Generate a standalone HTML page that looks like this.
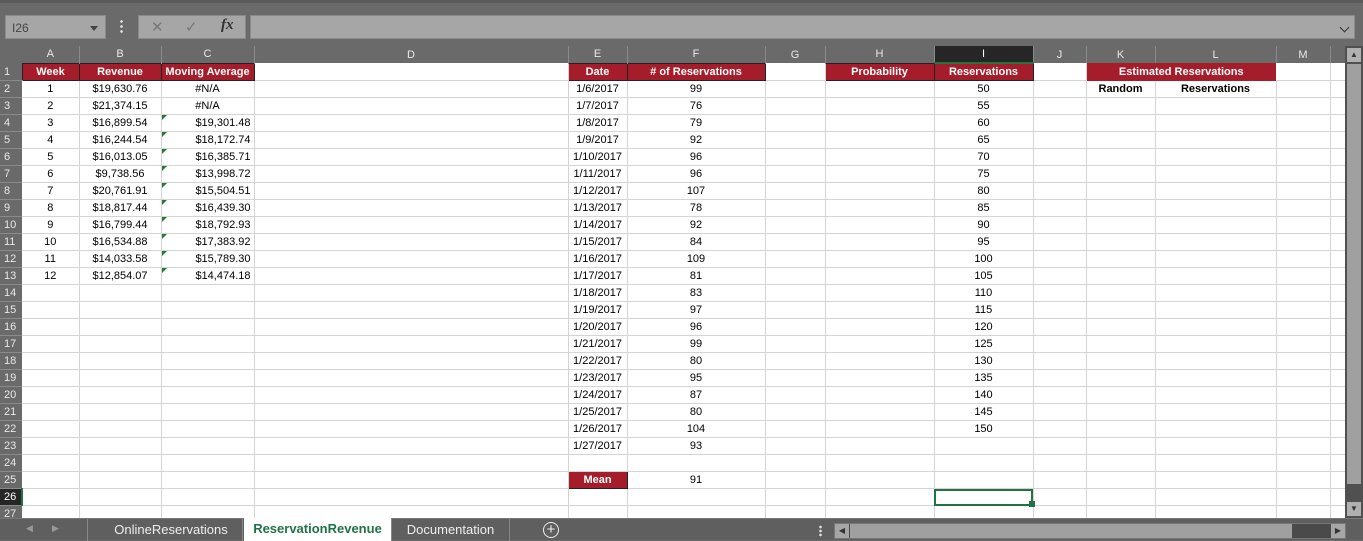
<!DOCTYPE html>
<html><head><meta charset="utf-8"><style>
*{margin:0;padding:0;box-sizing:border-box}
body{width:1363px;height:540px;overflow:hidden;background:#6a6a6a;font-family:"Liberation Sans",sans-serif;position:relative}
.top{position:absolute;left:0;top:0;width:1363px;height:45px;background:#6a6a6a;border-top:3px solid #5a5a5a}
.nb{position:absolute;left:5px;top:12px;width:101px;height:24px;background:#a6a6a6;border:1px solid #8a8a8a;font-size:12px;color:#444;padding:5px 0 0 6px}
.nb:after{content:"";position:absolute;right:7px;top:10px;border:4px solid transparent;border-top:5px solid #444}
.dots{position:absolute;left:120px;top:16px;width:3px;height:14px;background:radial-gradient(circle,#ddd 1.2px,transparent 1.5px) 0 0/3px 5px}
.fx{position:absolute;left:138px;top:12px;width:108px;height:24px;background:#a6a6a6;border:1px solid #8a8a8a;color:#777;font-size:15px}
.fb{position:absolute;left:250px;top:12px;width:1105px;height:24px;background:#a6a6a6;border:1px solid #8a8a8a}
.fb:after{content:"";position:absolute;right:6px;top:8px;width:6px;height:6px;border-right:1.5px solid #333;border-bottom:1.5px solid #333;transform:rotate(45deg)}
table{position:absolute;left:0;top:46px;border-collapse:collapse;table-layout:fixed;background:#fff;font-size:11px;color:#000}
td{height:17px;border-right:1px solid #d4d4d4;border-bottom:1px solid #d4d4d4;text-align:center;white-space:nowrap;overflow:hidden;padding:0;line-height:16px;position:relative}
tr.h td{background:#6a6a6a;color:#e8e8e8;border-right:1px solid #8a8a8a;border-bottom:none;height:17px;font-size:11px}
td.r{background:#6a6a6a;color:#e8e8e8;border-right:none;border-bottom:1px solid #8a8a8a;text-align:left;padding-left:4px}
td.sel{background:#262626!important;color:#fff!important}
.red{background:#a51c2b;color:#fff;font-weight:bold;border:1px solid #222}
.b{font-weight:bold}
.rt{text-align:right;padding-right:3px}
.t:before{content:"";position:absolute;left:0;top:0;border-top:5px solid #1e7d32;border-right:5px solid transparent}
.tabs{position:absolute;left:0;top:518px;width:1363px;height:22px;background:#5f5f5f;border-top:1px solid #777;font-size:13px;color:#eee}
.tab{position:absolute;top:0;height:22px;padding-top:3px;text-align:center;border-right:1px solid #888}
.vs{position:absolute;left:1345px;top:46px;width:18px;height:472px;background:#505050}
</style></head><body>
<div class="top">
<div class="nb">I26</div>
<div class="dots"></div>
<div class="fx"><span style="position:absolute;left:12px;top:2px">✕</span><span style="position:absolute;left:46px;top:2px">✓</span><span style="position:absolute;left:82px;top:1px;color:#333;font-style:italic;font-family:'Liberation Serif',serif;font-weight:bold">fx</span></div>
<div class="fb"></div>
</div>
<table>
<colgroup><col style="width:22px"><col style="width:57px"><col style="width:82px"><col style="width:93px"><col style="width:314px"><col style="width:59px"><col style="width:138px"><col style="width:60px"><col style="width:109px"><col style="width:99px"><col style="width:53px"><col style="width:69px"><col style="width:121px"><col style="width:54px"><col style="width:16px"></colgroup>
<tr class="h"><td style="border-right:none"></td><td>A</td><td>B</td><td>C</td><td>D</td><td>E</td><td>F</td><td>G</td><td>H</td><td class="sel" style="border-bottom:2px solid #217346">I</td><td>J</td><td>K</td><td>L</td><td>M</td><td></td></tr>
<tr><td class="r">1</td><td class="red">Week</td><td class="red">Revenue</td><td class="red">Moving Average</td><td></td><td class="red">Date</td><td class="red"># of Reservations</td><td></td><td class="red">Probability</td><td class="red">Reservations</td><td></td><td class="red" colspan="2" style="border:none">Estimated Reservations</td><td></td><td></td></tr>
<tr><td class="r">2</td><td>1</td><td>$19,630.76</td><td>#N/A</td><td></td><td>1/6/2017</td><td>99</td><td></td><td></td><td>50</td><td></td><td class="b">Random</td><td class="b">Reservations</td><td></td><td></td></tr>
<tr><td class="r">3</td><td>2</td><td>$21,374.15</td><td>#N/A</td><td></td><td>1/7/2017</td><td>76</td><td></td><td></td><td>55</td><td></td><td></td><td></td><td></td><td></td></tr>
<tr><td class="r">4</td><td>3</td><td>$16,899.54</td><td class="rt t">$19,301.48</td><td></td><td>1/8/2017</td><td>79</td><td></td><td></td><td>60</td><td></td><td></td><td></td><td></td><td></td></tr>
<tr><td class="r">5</td><td>4</td><td>$16,244.54</td><td class="rt t">$18,172.74</td><td></td><td>1/9/2017</td><td>92</td><td></td><td></td><td>65</td><td></td><td></td><td></td><td></td><td></td></tr>
<tr><td class="r">6</td><td>5</td><td>$16,013.05</td><td class="rt t">$16,385.71</td><td></td><td>1/10/2017</td><td>96</td><td></td><td></td><td>70</td><td></td><td></td><td></td><td></td><td></td></tr>
<tr><td class="r">7</td><td>6</td><td>$9,738.56</td><td class="rt t">$13,998.72</td><td></td><td>1/11/2017</td><td>96</td><td></td><td></td><td>75</td><td></td><td></td><td></td><td></td><td></td></tr>
<tr><td class="r">8</td><td>7</td><td>$20,761.91</td><td class="rt t">$15,504.51</td><td></td><td>1/12/2017</td><td>107</td><td></td><td></td><td>80</td><td></td><td></td><td></td><td></td><td></td></tr>
<tr><td class="r">9</td><td>8</td><td>$18,817.44</td><td class="rt t">$16,439.30</td><td></td><td>1/13/2017</td><td>78</td><td></td><td></td><td>85</td><td></td><td></td><td></td><td></td><td></td></tr>
<tr><td class="r">10</td><td>9</td><td>$16,799.44</td><td class="rt t">$18,792.93</td><td></td><td>1/14/2017</td><td>92</td><td></td><td></td><td>90</td><td></td><td></td><td></td><td></td><td></td></tr>
<tr><td class="r">11</td><td>10</td><td>$16,534.88</td><td class="rt t">$17,383.92</td><td></td><td>1/15/2017</td><td>84</td><td></td><td></td><td>95</td><td></td><td></td><td></td><td></td><td></td></tr>
<tr><td class="r">12</td><td>11</td><td>$14,033.58</td><td class="rt t">$15,789.30</td><td></td><td>1/16/2017</td><td>109</td><td></td><td></td><td>100</td><td></td><td></td><td></td><td></td><td></td></tr>
<tr><td class="r">13</td><td>12</td><td>$12,854.07</td><td class="rt t">$14,474.18</td><td></td><td>1/17/2017</td><td>81</td><td></td><td></td><td>105</td><td></td><td></td><td></td><td></td><td></td></tr>
<tr><td class="r">14</td><td></td><td></td><td></td><td></td><td>1/18/2017</td><td>83</td><td></td><td></td><td>110</td><td></td><td></td><td></td><td></td><td></td></tr>
<tr><td class="r">15</td><td></td><td></td><td></td><td></td><td>1/19/2017</td><td>97</td><td></td><td></td><td>115</td><td></td><td></td><td></td><td></td><td></td></tr>
<tr><td class="r">16</td><td></td><td></td><td></td><td></td><td>1/20/2017</td><td>96</td><td></td><td></td><td>120</td><td></td><td></td><td></td><td></td><td></td></tr>
<tr><td class="r">17</td><td></td><td></td><td></td><td></td><td>1/21/2017</td><td>99</td><td></td><td></td><td>125</td><td></td><td></td><td></td><td></td><td></td></tr>
<tr><td class="r">18</td><td></td><td></td><td></td><td></td><td>1/22/2017</td><td>80</td><td></td><td></td><td>130</td><td></td><td></td><td></td><td></td><td></td></tr>
<tr><td class="r">19</td><td></td><td></td><td></td><td></td><td>1/23/2017</td><td>95</td><td></td><td></td><td>135</td><td></td><td></td><td></td><td></td><td></td></tr>
<tr><td class="r">20</td><td></td><td></td><td></td><td></td><td>1/24/2017</td><td>87</td><td></td><td></td><td>140</td><td></td><td></td><td></td><td></td><td></td></tr>
<tr><td class="r">21</td><td></td><td></td><td></td><td></td><td>1/25/2017</td><td>80</td><td></td><td></td><td>145</td><td></td><td></td><td></td><td></td><td></td></tr>
<tr><td class="r">22</td><td></td><td></td><td></td><td></td><td>1/26/2017</td><td>104</td><td></td><td></td><td>150</td><td></td><td></td><td></td><td></td><td></td></tr>
<tr><td class="r">23</td><td></td><td></td><td></td><td></td><td>1/27/2017</td><td>93</td><td></td><td></td><td></td><td></td><td></td><td></td><td></td><td></td></tr>
<tr><td class="r">24</td><td></td><td></td><td></td><td></td><td></td><td></td><td></td><td></td><td></td><td></td><td></td><td></td><td></td><td></td></tr>
<tr><td class="r">25</td><td></td><td></td><td></td><td></td><td class="red">Mean</td><td>91</td><td></td><td></td><td></td><td></td><td></td><td></td><td></td><td></td></tr>
<tr><td class="r sel" style="border-right:2px solid #217346">26</td><td></td><td></td><td></td><td></td><td></td><td></td><td></td><td></td><td style="outline:2px solid #217346;outline-offset:-2px"></td><td></td><td></td><td></td><td></td><td></td></tr>
<tr><td class="r">27</td><td></td><td></td><td></td><td></td><td></td><td></td><td></td><td></td><td></td><td></td><td></td><td></td><td></td><td></td></tr>
</table>
<div style="position:absolute;left:1029px;top:501px;width:6px;height:6px;background:#217346"></div>
<div class="vs"><div style="position:absolute;left:2px;top:2px;width:14px;height:14px;background:#b0b0b0;color:#333;font-size:8px;text-align:center;line-height:14px">▲</div><div style="position:absolute;left:2px;top:18px;width:14px;height:420px;background:#a0a0a0"></div><div style="position:absolute;left:2px;bottom:2px;width:14px;height:14px;background:#b0b0b0;color:#333;font-size:8px;text-align:center;line-height:14px">▼</div></div>
<div class="tabs">
<span style="position:absolute;left:26px;top:4px;font-size:9px;color:#999">◀</span><span style="position:absolute;left:52px;top:4px;font-size:9px;color:#999">▶</span>
<div class="tab" style="left:87px;width:0;border-right:1px solid #888"></div>
<div class="tab" style="left:100px;width:143px">OnlineReservations</div>
<div class="tab" style="left:244px;width:148px;background:#fff;color:#217346;font-weight:bold;top:-1px;height:23px">ReservationRevenue</div>
<div class="tab" style="left:392px;width:118px">Documentation</div>
<div style="position:absolute;left:543px;top:3px;width:16px;height:16px;border:1.5px solid #eee;border-radius:50%;text-align:center;line-height:13px;font-size:15px">+</div>
<div style="position:absolute;left:819px;top:6px;width:3px;height:12px;background:radial-gradient(circle,#ddd 1.2px,transparent 1.5px) 0 0/3px 4px"></div>
<div style="position:absolute;left:834px;top:4px;width:512px;height:16px;background:#4a4a4a;border:1px solid #777"><div style="position:absolute;left:0;top:0;width:14px;height:14px;background:#a6a6a6;font-size:8px;color:#333;text-align:center;line-height:14px">◀</div><div style="position:absolute;left:15px;top:0;width:442px;height:14px;background:#a0a0a0"></div><div style="position:absolute;right:0;top:0;width:14px;height:14px;background:#a6a6a6;font-size:8px;color:#333;text-align:center;line-height:14px">▶</div></div>
</div>
</body></html>
